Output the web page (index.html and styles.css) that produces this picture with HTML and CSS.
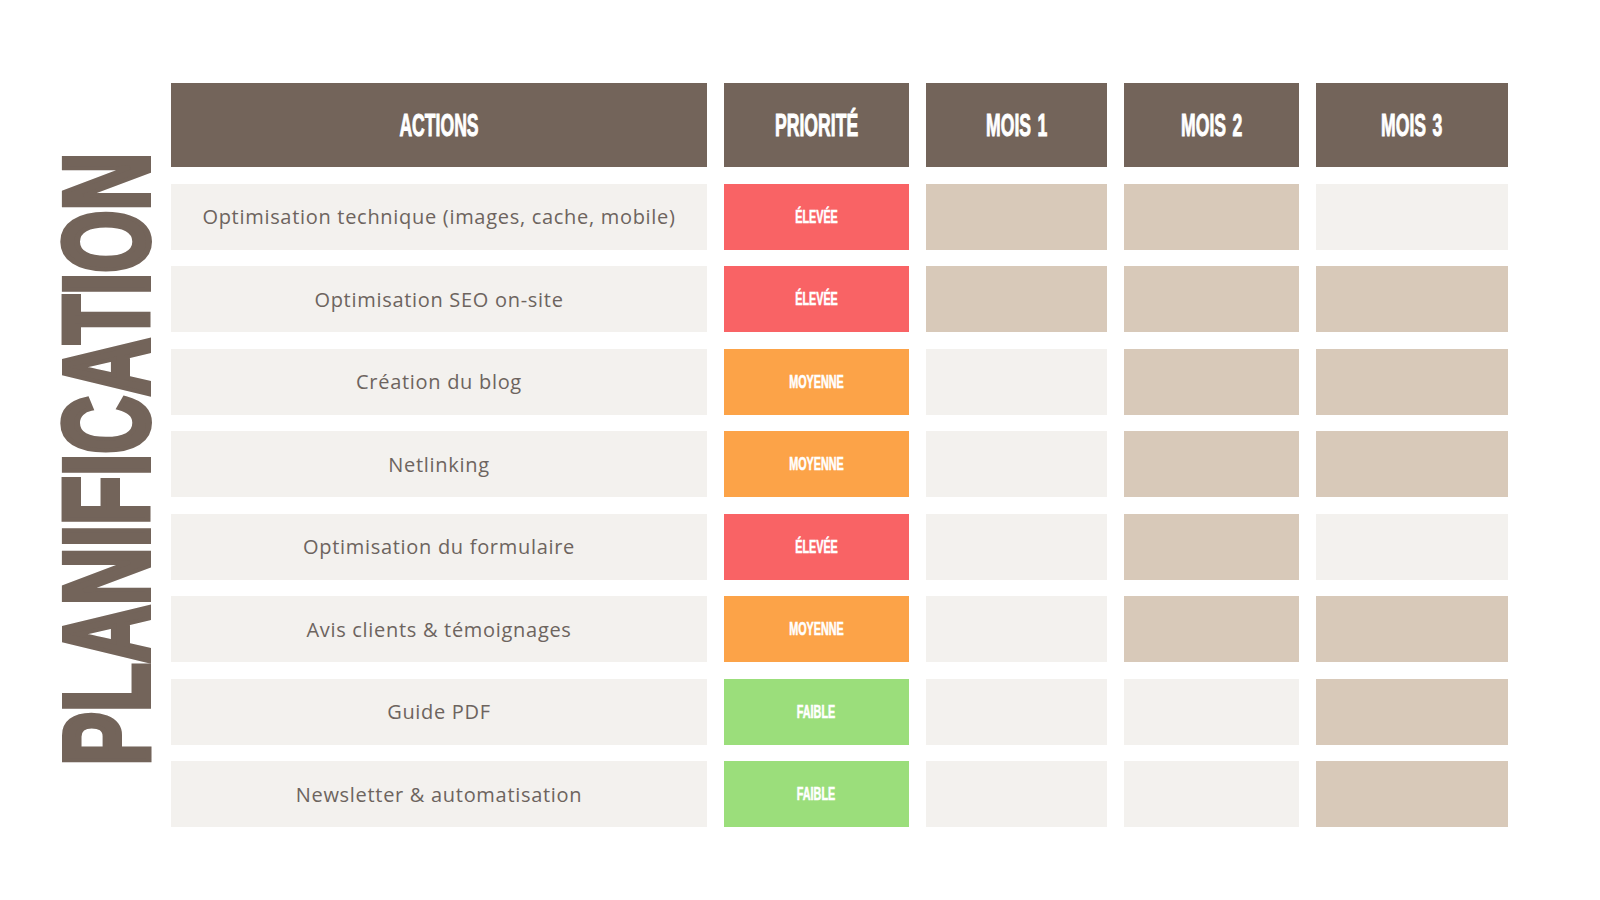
FILE: index.html
```html
<!DOCTYPE html>
<html lang="fr">
<head>
<meta charset="utf-8">
<title>Planification</title>
<link rel="stylesheet" href="styles.css">
</head>
<body>
<div class="page">
  <div class="side">
    <svg class="title-svg" width="171" height="744" viewBox="0 0 171 744">
      <text class="title-text" transform="translate(147.5,682.5) rotate(-90) scale(0.668,1)">PLANIFICATION</text>
    </svg>
  </div>
  <div class="grid">
    <div class="head"><span class="hl">ACTIONS</span></div>
    <div class="head"><span class="hl">PRIORITÉ</span></div>
    <div class="head"><span class="hl">MOIS 1</span></div>
    <div class="head"><span class="hl">MOIS 2</span></div>
    <div class="head"><span class="hl">MOIS 3</span></div>

    <div class="act">Optimisation technique (images, cache, mobile)</div>
    <div class="prio high"><span class="pl">ÉLEVÉE</span></div>
    <div class="cell on"></div><div class="cell on"></div><div class="cell"></div>

    <div class="act">Optimisation SEO on-site</div>
    <div class="prio high"><span class="pl">ÉLEVÉE</span></div>
    <div class="cell on"></div><div class="cell on"></div><div class="cell on"></div>

    <div class="act">Création du blog</div>
    <div class="prio mid"><span class="pl">MOYENNE</span></div>
    <div class="cell"></div><div class="cell on"></div><div class="cell on"></div>

    <div class="act">Netlinking</div>
    <div class="prio mid"><span class="pl">MOYENNE</span></div>
    <div class="cell"></div><div class="cell on"></div><div class="cell on"></div>

    <div class="act">Optimisation du formulaire</div>
    <div class="prio high"><span class="pl">ÉLEVÉE</span></div>
    <div class="cell"></div><div class="cell on"></div><div class="cell"></div>

    <div class="act">Avis clients &amp; témoignages</div>
    <div class="prio mid"><span class="pl">MOYENNE</span></div>
    <div class="cell"></div><div class="cell on"></div><div class="cell on"></div>

    <div class="act">Guide PDF</div>
    <div class="prio low"><span class="pl">FAIBLE</span></div>
    <div class="cell"></div><div class="cell"></div><div class="cell on"></div>

    <div class="act">Newsletter &amp; automatisation</div>
    <div class="prio low"><span class="pl">FAIBLE</span></div>
    <div class="cell"></div><div class="cell"></div><div class="cell on"></div>
  </div>
</div>
</body>
</html>
```
FILE: styles.css
```css
html, body {
  margin: 0;
  padding: 0;
  background: #ffffff;
}

.page {
  display: flex;
  align-items: flex-start;
  padding-top: 83px;
  width: 1600px;
  height: 900px;
  box-sizing: border-box;
}

.side {
  width: 171px;
  flex: none;
}

.title-svg {
  display: block;
  overflow: visible;
}

.title-text {
  font-family: "Liberation Sans", Arial, sans-serif;
  font-weight: 700;
  font-size: 120px;
  fill: #73645a;
  stroke: #73645a;
  stroke-width: 6px;
  stroke-linejoin: miter;
}

.grid {
  display: grid;
  grid-template-columns: 536px 185px 181px 175px 192px;
  grid-template-rows: 84px repeat(8, 66px);
  column-gap: 17px;
  row-gap: 16.5px;
}

.head {
  background: #73645a;
  display: flex;
  align-items: center;
  justify-content: center;
}

.hl {
  display: inline-block;
  font-family: "Liberation Sans", Arial, sans-serif;
  font-weight: 700;
  font-size: 32px;
  line-height: 1;
  color: #ffffff;
  -webkit-text-stroke: 1px #ffffff;
  word-spacing: 3px;
  transform: scaleX(0.55);
  white-space: nowrap;
}

.act {
  background: #f3f1ee;
  display: flex;
  align-items: center;
  justify-content: center;
  font-family: "Open Sans", sans-serif;
  font-size: 20px;
  letter-spacing: 0.7px;
  color: #6d645e;
  white-space: nowrap;
}

.prio {
  display: flex;
  align-items: center;
  justify-content: center;
}

.pl {
  display: inline-block;
  font-family: "Liberation Sans", Arial, sans-serif;
  font-weight: 700;
  font-size: 18px;
  line-height: 1;
  color: #ffffff;
  -webkit-text-stroke: 0.6px #ffffff;
  transform: scaleX(0.6);
  white-space: nowrap;
}

.high { background: #f96365; }
.mid { background: #fca348; }
.low { background: #9bde7b; }

.cell { background: #f3f1ee; }
.cell.on { background: #d8c9b9; }
```
